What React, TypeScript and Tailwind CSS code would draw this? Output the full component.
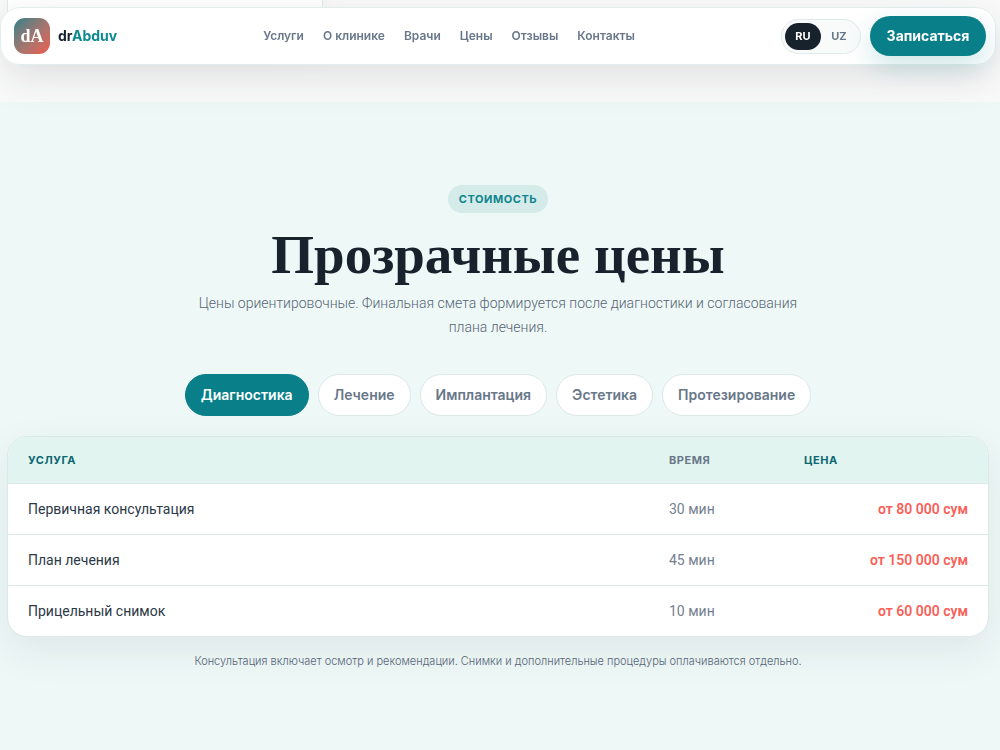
import React, { useState } from "react";

interface PriceItem {
  name: string;
  time: string;
  price: string;
}

const NAV_LINKS = [
  { label: "Услуги", href: "#services" },
  { label: "О клинике", href: "#about" },
  { label: "Врачи", href: "#doctors" },
  { label: "Цены", href: "#prices" },
  { label: "Отзывы", href: "#reviews" },
  { label: "Контакты", href: "#contacts" },
];

const CATEGORIES = ["Диагностика", "Лечение", "Имплантация", "Эстетика", "Протезирование"];

const PRICES: PriceItem[] = [
  { name: "Первичная консультация", time: "30 мин", price: "от 80 000 сум" },
  { name: "План лечения", time: "45 мин", price: "от 150 000 сум" },
  { name: "Прицельный снимок", time: "10 мин", price: "от 60 000 сум" },
];

function Header() {
  const [lang, setLang] = useState("RU");

  return (
    <header className="fixed inset-x-0 top-[7px] z-10 mr-1 flex h-[58px] items-center justify-between rounded-[20px] border border-[#e2eeed] bg-white/98 pl-[13px] pr-[9px] shadow-[0_14px_40px_rgba(24,34,45,0.11)]">
      <a href="#top" className="flex items-center gap-2">
        <span className="flex size-9 items-center justify-center rounded-[11px] bg-linear-135 from-[#087f89] to-[#f0574f] font-['Liberation_Serif',serif] text-lg font-bold text-white">
          dA
        </span>
        <span className="text-sm font-bold text-[#18222d]">
          dr<span className="text-[#0c8a92]">Abduv</span>
        </span>
      </a>

      <nav className="flex gap-[19px]">
        {NAV_LINKS.map((link) => (
          <a key={link.href} href={link.href} className="text-xs font-semibold leading-5 text-[#687789]">
            {link.label}
          </a>
        ))}
      </nav>

      <div className="flex items-center gap-[9px]">
        <div className="flex rounded-full border border-[#deebea] bg-[#f9fbfb] p-[3px]">
          {["RU", "UZ"].map((code) => (
            <button
              key={code}
              type="button"
              onClick={() => setLang(code)}
              className={`h-[27px] w-9 rounded-full text-[11px] font-bold ${
                lang === code ? "bg-[#18222d] text-white" : "text-[#687789]"
              }`}
            >
              {code}
            </button>
          ))}
        </div>
        <button
          type="button"
          className="h-10 w-[116px] rounded-full bg-[#087f89] text-sm font-bold text-white shadow-[0_10px_28px_rgba(8,127,137,0.2)]"
        >
          Записаться
        </button>
      </div>
    </header>
  );
}

function PriceTable() {
  return (
    <div className="mt-5 overflow-hidden rounded-[20px] border border-[#dbe9e7] bg-white shadow-[0_14px_40px_rgba(24,34,45,0.08)]">
      <table className="w-full table-fixed text-left">
        <thead>
          <tr className="h-[46px] border-b border-[#dbe9e7] bg-[#e2f4f0] text-[11px] tracking-wider text-[#0b6770]">
            <th className="px-5 font-bold">УСЛУГА</th>
            <th className="w-[135px] px-5 font-bold text-[#687789]">ВРЕМЯ</th>
            <th className="w-[204px] px-5 font-bold">ЦЕНА</th>
          </tr>
        </thead>
        <tbody className="font-['Roboto',sans-serif] text-sm">
          {PRICES.map((item) => (
            <tr key={item.name} className="h-[51px] border-b border-[#dbe9e7] last:border-b-0">
              <td className="px-5 text-[#2c3846]">{item.name}</td>
              <td className="px-5 text-[#74808f]">{item.time}</td>
              <td className="px-5 text-right font-semibold text-[#fa5f58]">{item.price}</td>
            </tr>
          ))}
        </tbody>
      </table>
    </div>
  );
}

export default function App() {
  const [category, setCategory] = useState(CATEGORIES[0]);

  return (
    <div id="top" className="flex min-h-screen flex-col bg-[#eef8f7] font-['Inter',sans-serif]">
      <Header />

      {/* Bottom edge of the previous section */}
      <section className="h-[102px] overflow-hidden bg-[#fafafa] px-[7px]">
        <div className="h-8 w-[316px] rounded-b-[20px] border border-t-0 border-[#deebea] bg-white shadow-[0_14px_40px_rgba(24,34,45,0.08)]" />
      </section>

      <main id="prices" className="pb-20 pl-[7px] pr-[11px] pt-[83px]">
        <div className="mx-auto flex max-w-[620px] flex-col items-center text-center">
          <span className="flex h-7 items-center rounded-full bg-[#d5ebe9] px-[11px] text-[11px] font-bold tracking-wider text-[#0c858d]">
            СТОИМОСТЬ
          </span>
          <h1 className="mt-3 whitespace-nowrap font-['Liberation_Serif',serif] text-[55px] font-bold leading-[60px] text-[#18222d]">
            Прозрачные цены
          </h1>
          <p className="mt-[6px] font-['Roboto',sans-serif] text-sm font-light leading-6 text-[#566474]">
            Цены ориентировочные. Финальная смета формируется после диагностики и согласования плана
            лечения.
          </p>
        </div>

        <div className="mt-[35px] flex flex-wrap justify-center gap-[9px]">
          {CATEGORIES.map((item) => (
            <button
              key={item}
              type="button"
              onClick={() => setCategory(item)}
              className={`h-[42px] rounded-full border px-[15px] text-sm font-semibold ${
                category === item
                  ? "border-[#087f89] bg-[#087f89] text-white"
                  : "border-[#dbe9e7] bg-white text-[#687789]"
              }`}
            >
              {item}
            </button>
          ))}
        </div>

        <PriceTable />

        <p className="mt-[14px] text-center text-[11px] font-light leading-5 text-[#566474]">
          Консультация включает осмотр и рекомендации. Снимки и дополнительные процедуры оплачиваются
          отдельно.
        </p>
      </main>
    </div>
  );
}
